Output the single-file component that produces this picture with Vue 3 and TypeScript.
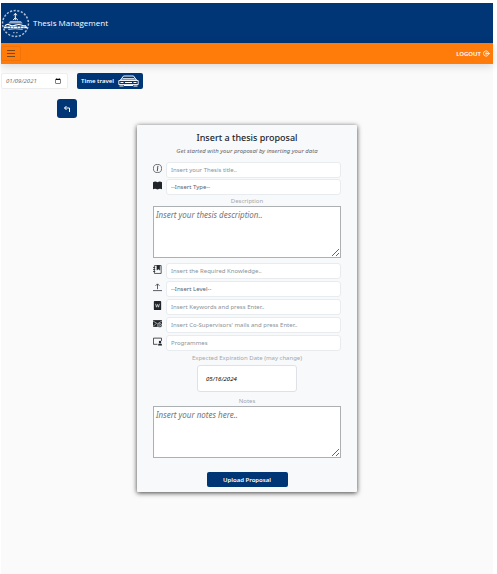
<script setup lang="ts">
import { ref } from 'vue'

const travelDate = ref('2021-01-09')
const title = ref('')
const kind = ref('')
const description = ref('')
const knowledge = ref('')
const level = ref('')
const keywords = ref('')
const supervisors = ref('')
const programmes = ref('')
const expiration = ref('2024-05-16')
const notes = ref('')
</script>

<template>
  <div class="page">
    <header class="brand">
      <svg class="crest" viewBox="0 0 30 30" fill="none" stroke="#fff" aria-hidden="true">
        <circle cx="15" cy="15" r="13.4" stroke-width="1.5" stroke-dasharray="2.2 1.6" opacity=".7" />
        <path d="M14.8 4.500v7M13 6.500l2-2 1.300 2M12.500 11.500l2.300-2.500 2.700 2.500" stroke-width="1" />
        <path d="M9.500 12.500h11l2 2.500h-15z" fill="#fff" fill-opacity=".6" stroke="none" />
        <path d="M4 17.500q2.500-2.500 5-1t6 .2 6-.2 5 1" stroke-width="1.2" />
        <path d="M3 19h24" stroke-width="1.8" stroke-dasharray="3 .5" />
        <path d="M7.500 21.200q7.500-1.500 15 0M12.500 24.500h1.600M15.600 24.500h1.600" stroke-width=".9" opacity=".8" />
      </svg>
      <span class="brand-name">Thesis Management</span>
    </header>

    <nav class="menu">
      <button class="burger" type="button" aria-label="Menu">
        <svg viewBox="0 0 8 7" stroke="#7b4a1c" stroke-width="1" aria-hidden="true">
          <path d="M0 .5h8M0 3.5h8M0 6.5h8" />
        </svg>
      </button>
      <a class="logout" href="#">
        LOGOUT
        <svg viewBox="0 0 16 16" fill="none" stroke="#fff" stroke-width="1.8" aria-hidden="true">
          <path d="M11 4V3.5a6 6 0 1 0 0 9V12M6 8h9M12 5l3 3-3 3" />
          <path d="M6 6h4v4H6z" stroke-width="1" />
        </svg>
      </a>
    </nav>

    <main class="content">
      <div class="travel">
        <input v-model="travelDate" class="travel-date" type="date" aria-label="Current date" />
        <button class="travel-button" type="button">
          Time travel
          <svg viewBox="0 0 21 12" fill="none" stroke="#fff" aria-hidden="true">
            <path d="M5.500 1h10M5.500 1L2.500 5h16L15.500 1" stroke-width="1" />
            <path d="M4.500 3.500h12" stroke-width=".8" />
            <path d="M.8 5.500h19.400v4H.8z" stroke-width=".9" />
            <path d="M2.500 7.500h3M7 7.500h7M15.500 7.500h3" stroke-width="1.1" />
            <path d="M1.500 11h4M15.500 11h4M6 10.500h9" stroke-width="1" />
          </svg>
        </button>
      </div>

      <button class="back" type="button" aria-label="Back">
        <svg viewBox="0 0 8 8" fill="none" stroke="#fff" stroke-width="1" aria-hidden="true">
          <path d="M3.500 1L1.500 3l2 2M1.500 3H6.500v4" />
        </svg>
      </button>

      <form class="card" @submit.prevent>
        <h1>Insert a thesis proposal</h1>
        <p class="lead">Get started with your proposal by inserting your data</p>

        <div class="rows">
          <div class="row">
            <svg class="icon" viewBox="0 0 16 16" fill="none" stroke="#212529" aria-hidden="true">
              <circle cx="8" cy="8" r="7.3" stroke-width="1.1" />
              <path d="M7 6.500h1.600L7.500 12h1.300" stroke-width="1.4" />
              <circle cx="8.700" cy="4.200" r="1" fill="#212529" stroke="none" />
            </svg>
            <input v-model="title" type="text" placeholder="Insert your Thesis title.." aria-label="Title" />
          </div>
          <div class="row">
            <svg class="icon" viewBox="0 0 16 16" fill="#212529" aria-hidden="true">
              <path d="M0 2q4-2 8 0 4-2 8 0v12.500q-4-1.500-8 .5-4-2-8-.5z" />
            </svg>
            <select v-model="kind" aria-label="Type">
              <option value="">--Insert Type--</option>
            </select>
          </div>
        </div>

        <label class="caption" for="description">Description</label>
        <textarea id="description" v-model="description" placeholder="Insert your thesis description.."></textarea>

        <div class="rows spaced">
          <div class="row">
            <svg class="icon" viewBox="0 0 16 16" fill="none" stroke="#212529" aria-hidden="true">
              <path d="M2.500 1h12v14h-12z" stroke-width="1.3" />
              <path d="M0 4.500h4M0 8h4M0 11.500h4" stroke-width="1.3" />
              <path d="M7 1h5v8L9.500 7 7 9z" fill="#212529" stroke="#212529" />
            </svg>
            <input v-model="knowledge" type="text" placeholder="Insert the Required Knowledge.." aria-label="Required knowledge" />
          </div>
          <div class="row">
            <svg class="icon" viewBox="0 0 16 16" fill="none" stroke="#212529" stroke-width="1.3" aria-hidden="true">
              <path d="M8 11V2M4.500 5L8 1.500 11.500 5M0 13.500h16" />
            </svg>
            <select v-model="level" aria-label="Level">
              <option value="">--Insert Level--</option>
            </select>
          </div>
          <div class="row">
            <svg class="icon" viewBox="0 0 16 16" aria-hidden="true">
              <rect x="1.500" width="13" height="16" rx="1.500" fill="#212529" />
              <path d="M4.500 5l1.700 6L8 6l1.800 5 1.700-6" fill="none" stroke="#fff" stroke-width="1.1" />
            </svg>
            <input v-model="keywords" type="text" placeholder="Insert Keywords and press Enter.." aria-label="Keywords" />
          </div>
          <div class="row">
            <svg class="icon" viewBox="0 0 16 16" aria-hidden="true">
              <path d="M0 2h16v12H0z" fill="#212529" />
              <path d="M0 3.500l8 5 8-5M0 13l6-5" fill="none" stroke="#f8f9fa" stroke-width="1" />
              <circle cx="12" cy="11.500" r="3.800" fill="#212529" stroke="#f8f9fa" />
              <circle cx="12" cy="11.500" r="1.400" fill="none" stroke="#f8f9fa" />
            </svg>
            <input v-model="supervisors" type="text" placeholder="Insert Co-Supervisors' mails and press Enter.." aria-label="Co-supervisors" />
          </div>
          <div class="row">
            <svg class="icon" viewBox="0 0 16 16" aria-hidden="true">
              <path d="M8 13H.8V2h14.400v5" fill="none" stroke="#212529" stroke-width="1.4" />
              <circle cx="12.500" cy="9" r="2.200" fill="#212529" />
              <path d="M9 15v-1q0-2.500 3.500-2.500T16 14v1z" fill="#212529" />
            </svg>
            <input v-model="programmes" type="text" placeholder="Programmes" aria-label="Programmes" />
          </div>
        </div>

        <label class="caption roomy" for="expiration">Expected Expiration Date (may change)</label>
        <input id="expiration" v-model="expiration" class="expiration" type="date" />

        <label class="caption" for="notes">Notes</label>
        <textarea id="notes" v-model="notes" placeholder="Insert your notes here.."></textarea>

        <button class="submit" type="submit">Upload Proposal</button>
      </form>
    </main>
  </div>
</template>

<style>
body {
  background: #fff;
}
</style>

<style scoped>
.page,
.page * {
  box-sizing: border-box;
}

.page {
  min-height: calc(100vh - 3px);
  margin: 3px 4px 0 1px;
  background: #fafafa;
  color: #212529;
  font-family: "Noto Sans", "Open Sans", sans-serif;
  font-size: 6px;
  line-height: 8px;
}

button,
input,
select,
textarea {
  margin: 0;
  font-family: inherit;
}

button {
  border: 0;
  padding: 0;
}

svg {
  display: block;
  flex: none;
}

.brand {
  display: flex;
  align-items: center;
  gap: 3px;
  height: 40px;
  background: #003576;
}

.crest {
  width: 29px;
  height: 29px;
}

.brand-name {
  color: #fff;
  font-family: "Open Sans", "Noto Sans", sans-serif;
  font-size: 8px;
  font-weight: 500;
  line-height: 12px;
}

.menu {
  display: flex;
  align-items: center;
  justify-content: space-between;
  height: 21px;
  padding-right: 3px;
  background: #ff7c0a;
  box-shadow: 0 2px 8px rgba(0, 0, 0, 0.15);
}

.burger {
  display: grid;
  place-items: center;
  width: 20px;
  height: 15px;
  border: 1px solid #f17309;
  border-radius: 2px;
  background: transparent;
}

.burger svg {
  width: 8px;
  height: 7px;
}

.logout {
  display: flex;
  align-items: center;
  gap: 2px;
  color: #fff;
  font-weight: 600;
  text-decoration: none;
}

.logout svg {
  width: 7px;
  height: 7px;
}

.content {
  display: flex;
  flex-direction: column;
  align-items: flex-start;
  padding-top: 9px;
}

.travel {
  display: flex;
  gap: 9px;
}

.travel-date {
  width: 67px;
  height: 16px;
  padding: 0 6px 0 4px;
  border: 1px solid #eee;
  border-radius: 2px;
  background: #fff;
  color: #6c757d;
  font-size: 6px;
  font-style: italic;
}

.travel-date::-webkit-calendar-picker-indicator {
  width: 6px;
  height: 6px;
  padding: 0;
}

input::-webkit-datetime-edit-month-field,
input::-webkit-datetime-edit-day-field,
input::-webkit-datetime-edit-year-field {
  padding: 0;
}

.travel-button {
  display: flex;
  align-items: center;
  justify-content: center;
  gap: 4px;
  width: 66px;
  height: 16px;
  border-radius: 2px;
  background: #003576;
  color: #fff;
  font-size: 6px;
  font-weight: 600;
}

.travel-button svg {
  width: 21px;
  height: 12px;
}

.back {
  display: grid;
  place-items: center;
  width: 20px;
  height: 19px;
  margin: 10px 0 0 56px;
  border-radius: 3px;
  background: #003576;
}

.back svg {
  width: 8px;
  height: 8px;
}

.card {
  display: flex;
  flex-direction: column;
  align-items: center;
  align-self: center;
  width: 44%;
  min-width: 220px;
  margin: 7px 0 24px;
  padding: 6px 16px 5px;
  border-radius: 1px;
  background: #f8f9fb;
  box-shadow: 0 1px 5px rgba(0, 0, 0, 0.75);
}

h1 {
  margin: 0;
  font-size: 9px;
  font-weight: 500;
  line-height: 14px;
}

.lead {
  margin: 2px 0 7px;
  color: #5c636a;
  font-style: italic;
}

.rows {
  display: flex;
  flex-direction: column;
  gap: 1px;
  width: 100%;
}

.spaced {
  gap: 2px;
  margin-top: 5px;
}

.row {
  display: flex;
  align-items: center;
  gap: 4px;
}

.icon {
  width: 9px;
  height: 9px;
  margin-bottom: 4px;
}

.row input,
.row select {
  flex: 1;
  min-width: 0;
  height: 16px;
  padding: 0 4px;
  border: 1px solid #e9ecef;
  border-radius: 3px;
  background: #fff;
  color: #5c636a;
  font-size: 6px;
  appearance: none;
}

.row input::placeholder {
  color: #8b9298;
}

.caption {
  margin: 2px 0 1px;
  color: #a3a8ad;
}

.roomy {
  margin: 3px 0;
}

textarea {
  display: block;
  width: 100%;
  height: 52px;
  padding: 3px 2px;
  border: 1px solid #adb0b3;
  border-radius: 0;
  background: #fff;
  font-size: 8px;
  font-style: italic;
  line-height: 10px;
  resize: vertical;
}

textarea::placeholder {
  color: #757575;
}

.expiration {
  width: 100px;
  height: 27px;
  margin-bottom: 3px;
  padding: 0 8px;
  border: 1px solid #dee2e6;
  border-radius: 3px;
  background: #fff;
  color: #000;
  font-size: 6px;
  font-style: italic;
}

.expiration::-webkit-calendar-picker-indicator {
  display: none;
}

.submit {
  width: 81px;
  height: 15px;
  margin-top: 14px;
  border-radius: 2px;
  background: #003576;
  color: #fff;
  font-size: 6px;
  font-weight: 600;
}
</style>
